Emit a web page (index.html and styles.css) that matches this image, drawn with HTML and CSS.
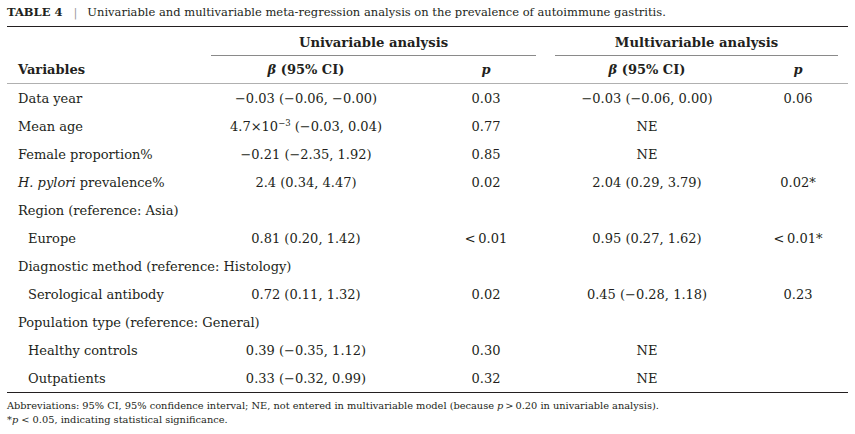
FILE: index.html
```html
<!DOCTYPE html>
<html>
<head>
<meta charset="utf-8">
<link rel="stylesheet" href="styles.css">
</head>
<body>
<div class="page">
  <p class="caption"><span class="label">TABLE 4</span><span class="sep">|</span>Univariable and multivariable meta-regression analysis on the prevalence of autoimmune gastritis.</p>
  <table class="tbl">
    <colgroup>
      <col class="c-var"><col class="c-b1"><col class="c-p1"><col class="c-b2"><col class="c-p2">
    </colgroup>
    <thead>
      <tr class="group">
        <th></th>
        <th colspan="2"><div class="grp grp-uni">Univariable analysis</div></th>
        <th colspan="2"><div class="grp grp-multi">Multivariable analysis</div></th>
      </tr>
      <tr class="head">
        <th class="var">Variables</th>
        <th><i>β</i> (95% CI)</th>
        <th><i>p</i></th>
        <th><i>β</i> (95% CI)</th>
        <th><i>p</i></th>
      </tr>
    </thead>
    <tbody>
      <tr><td class="var">Data year</td><td>−0.03 (−0.06, −0.00)</td><td>0.03</td><td>−0.03 (−0.06, 0.00)</td><td>0.06</td></tr>
      <tr><td class="var">Mean age</td><td>4.7×10<sup>−3</sup> (−0.03, 0.04)</td><td>0.77</td><td>NE</td><td></td></tr>
      <tr><td class="var">Female proportion%</td><td>−0.21 (−2.35, 1.92)</td><td>0.85</td><td>NE</td><td></td></tr>
      <tr><td class="var"><i>H. pylori</i> prevalence%</td><td>2.4 (0.34, 4.47)</td><td>0.02</td><td>2.04 (0.29, 3.79)</td><td>0.02*</td></tr>
      <tr><td class="var" colspan="5">Region (reference: Asia)</td></tr>
      <tr><td class="var sub">Europe</td><td>0.81 (0.20, 1.42)</td><td>&lt;&#8201;0.01</td><td>0.95 (0.27, 1.62)</td><td>&lt;&#8201;0.01*</td></tr>
      <tr><td class="var" colspan="5">Diagnostic method (reference: Histology)</td></tr>
      <tr><td class="var sub">Serological antibody</td><td>0.72 (0.11, 1.32)</td><td>0.02</td><td>0.45 (−0.28, 1.18)</td><td>0.23</td></tr>
      <tr><td class="var" colspan="5">Population type (reference: General)</td></tr>
      <tr><td class="var sub">Healthy controls</td><td>0.39 (−0.35, 1.12)</td><td>0.30</td><td>NE</td><td></td></tr>
      <tr><td class="var sub">Outpatients</td><td>0.33 (−0.32, 0.99)</td><td>0.32</td><td>NE</td><td></td></tr>
    </tbody>
  </table>
  <div class="notes">
    <p>Abbreviations: 95% CI, 95% confidence interval; NE, not entered in multivariable model (because <i>p</i>&#8201;&gt;&#8201;0.20 in univariable analysis).</p>
    <p>*<i>p</i> &lt; 0.05, indicating statistical significance.</p>
  </div>
</div>
</body>
</html>
```

FILE: styles.css
```css
html, body {
  margin: 0;
  padding: 0;
  background: #ffffff;
}

.page {
  padding: 4px 7px 0 7px;
  font-family: "DejaVu Serif", "Liberation Serif", serif;
  color: #231f20;
}

.caption {
  margin: 0;
  font-size: 11.5px;
  line-height: 16px;
  height: 22px;
}

.caption .label {
  font-weight: bold;
  font-size: 11.5px;
}

.caption .sep {
  color: #9a9a9a;
  margin: 0 10px 0 11px;
}

.tbl {
  width: 841px;
  table-layout: fixed;
  border-collapse: collapse;
  font-size: 13px;
  border-top: 1.5px solid #231f20;
  border-bottom: 1.5px solid #231f20;
}

.c-var { width: 179px; }
.c-b1 { width: 240px; }
.c-p1 { width: 120px; }
.c-b2 { width: 202px; }
.c-p2 { width: 100px; }

.tbl th, .tbl td {
  padding: 0;
  text-align: center;
  vertical-align: middle;
  white-space: nowrap;
}

.tbl tr.group th {
  height: 29px;
  vertical-align: bottom;
  font-size: 13.2px;
}

.grp {
  border-bottom: 1px solid #8a8a8a;
  padding-bottom: 5px;
  font-weight: bold;
}

.grp-uni { margin: 0 10px 0 25px; }
.grp-multi { margin: 0 10px 0 9px; }

.tbl tr.head th {
  height: 27px;
  font-weight: bold;
  font-size: 13px;
  border-bottom: 1.5px solid #b0b0b0;
}

.tbl tbody td {
  height: 28px;
}

.tbl .var {
  text-align: left;
  padding-left: 11px;
}

.tbl .var.sub {
  padding-left: 21px;
}

.tbl sup {
  font-size: 8.5px;
  line-height: 0;
}

.notes {
  margin-top: 6px;
  font-size: 9.8px;
  line-height: 14px;
}

.notes p {
  margin: 0;
}
```
